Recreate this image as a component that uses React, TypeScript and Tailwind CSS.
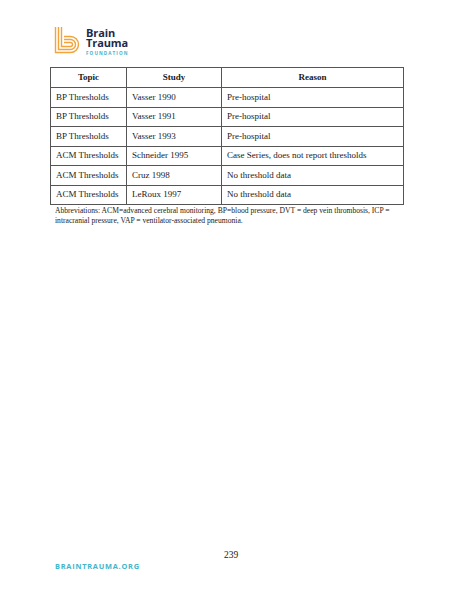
import React from 'react';

const rows = [
  { topic: 'BP Thresholds', study: 'Vasser 1990', reason: 'Pre-hospital' },
  { topic: 'BP Thresholds', study: 'Vasser 1991', reason: 'Pre-hospital' },
  { topic: 'BP Thresholds', study: 'Vasser 1993', reason: 'Pre-hospital' },
  { topic: 'ACM Thresholds', study: 'Schneider 1995', reason: 'Case Series, does not report thresholds' },
  { topic: 'ACM Thresholds', study: 'Cruz 1998', reason: 'No threshold data' },
  { topic: 'ACM Thresholds', study: 'LeRoux 1997', reason: 'No threshold data' },
];

const serif = "font-['Liberation_Serif','Times_New_Roman',serif]";

function LogoMark() {
  // three nested "b" strokes
  return (
    <svg width="26" height="27" viewBox="0 0 26 27" fill="none" stroke="#f2a33a" strokeWidth="1.4">
      <path d="M1.5 0 V25.5 H16.5 A8 8 0 0 0 16.5 9.5 H10" />
      <path d="M4.5 0 V22.5 H16.5 A5 5 0 0 0 16.5 12.5 H10" />
      <path d="M7.5 0 V19.5 H16.5 A2 2 0 0 0 16.5 15.5 H10" />
    </svg>
  );
}

export default function App() {
  return (
    <div className="w-[463px] h-[599px] bg-white flex flex-col">
      {/* Logo */}
      <div className="pt-[27px] pl-[54px] flex items-start gap-[6px] h-[55px]">
        <LogoMark />
        <div className="flex flex-col font-['Open_Sans',sans-serif]">
          <span className="text-[11px] font-bold leading-[10px] mt-[1px] tracking-[-0.1px] text-[#1c2a4e]">
            Brain
            <br />
            Trauma
          </span>
          <span className="text-[4.6px] font-bold leading-[6px] mt-[2px] tracking-[1.1px] text-[#3cb4cb]">FOUNDATION</span>
        </div>
      </div>

      {/* Table */}
      <div className={`mt-[12px] ml-[50px] w-[354px] ${serif} text-[9px] text-[#1a1a1a]`}>
        <table className="w-full border-collapse border border-[#555]">
          <thead>
            <tr className="h-[20px]">
              <th className="w-[76px] border border-[#555] font-bold text-center">Topic</th>
              <th className="w-[95px] border border-[#555] font-bold text-center">Study</th>
              <th className="border border-[#555] font-bold text-center">Reason</th>
            </tr>
          </thead>
          <tbody>
            {rows.map((r, i) => (
              <tr key={i} className="h-[19.5px]">
                <td className="border border-[#555] pl-[5px] font-normal">{r.topic}</td>
                <td className="border border-[#555] pl-[5px]">{r.study}</td>
                <td className="border border-[#555] pl-[5px]">{r.reason}</td>
              </tr>
            ))}
          </tbody>
        </table>
        <p className="pl-[5px] mt-[1px] text-[7.6px] leading-[9.5px] pr-[10px]">
          Abbreviations: ACM=advanced cerebral monitoring, BP=blood pressure, DVT = deep vein thrombosis, ICP =
          intracranial pressure, VAP = ventilator-associated pneumonia.
        </p>
      </div>

      <div className="flex-1" />

      {/* Footer */}
      <div className="pb-[29px] relative">
        <div className={`${serif} text-[9.5px] text-center text-[#1a1a1a] leading-[10px] pr-[1px]`}>239</div>
        <div className="pl-[55px] mt-[2px] font-['Open_Sans',sans-serif] font-bold text-[7.4px] leading-[8px] tracking-[0.75px] text-[#3fb6cc]">
          BRAINTRAUMA.ORG
        </div>
      </div>
    </div>
  );
}
